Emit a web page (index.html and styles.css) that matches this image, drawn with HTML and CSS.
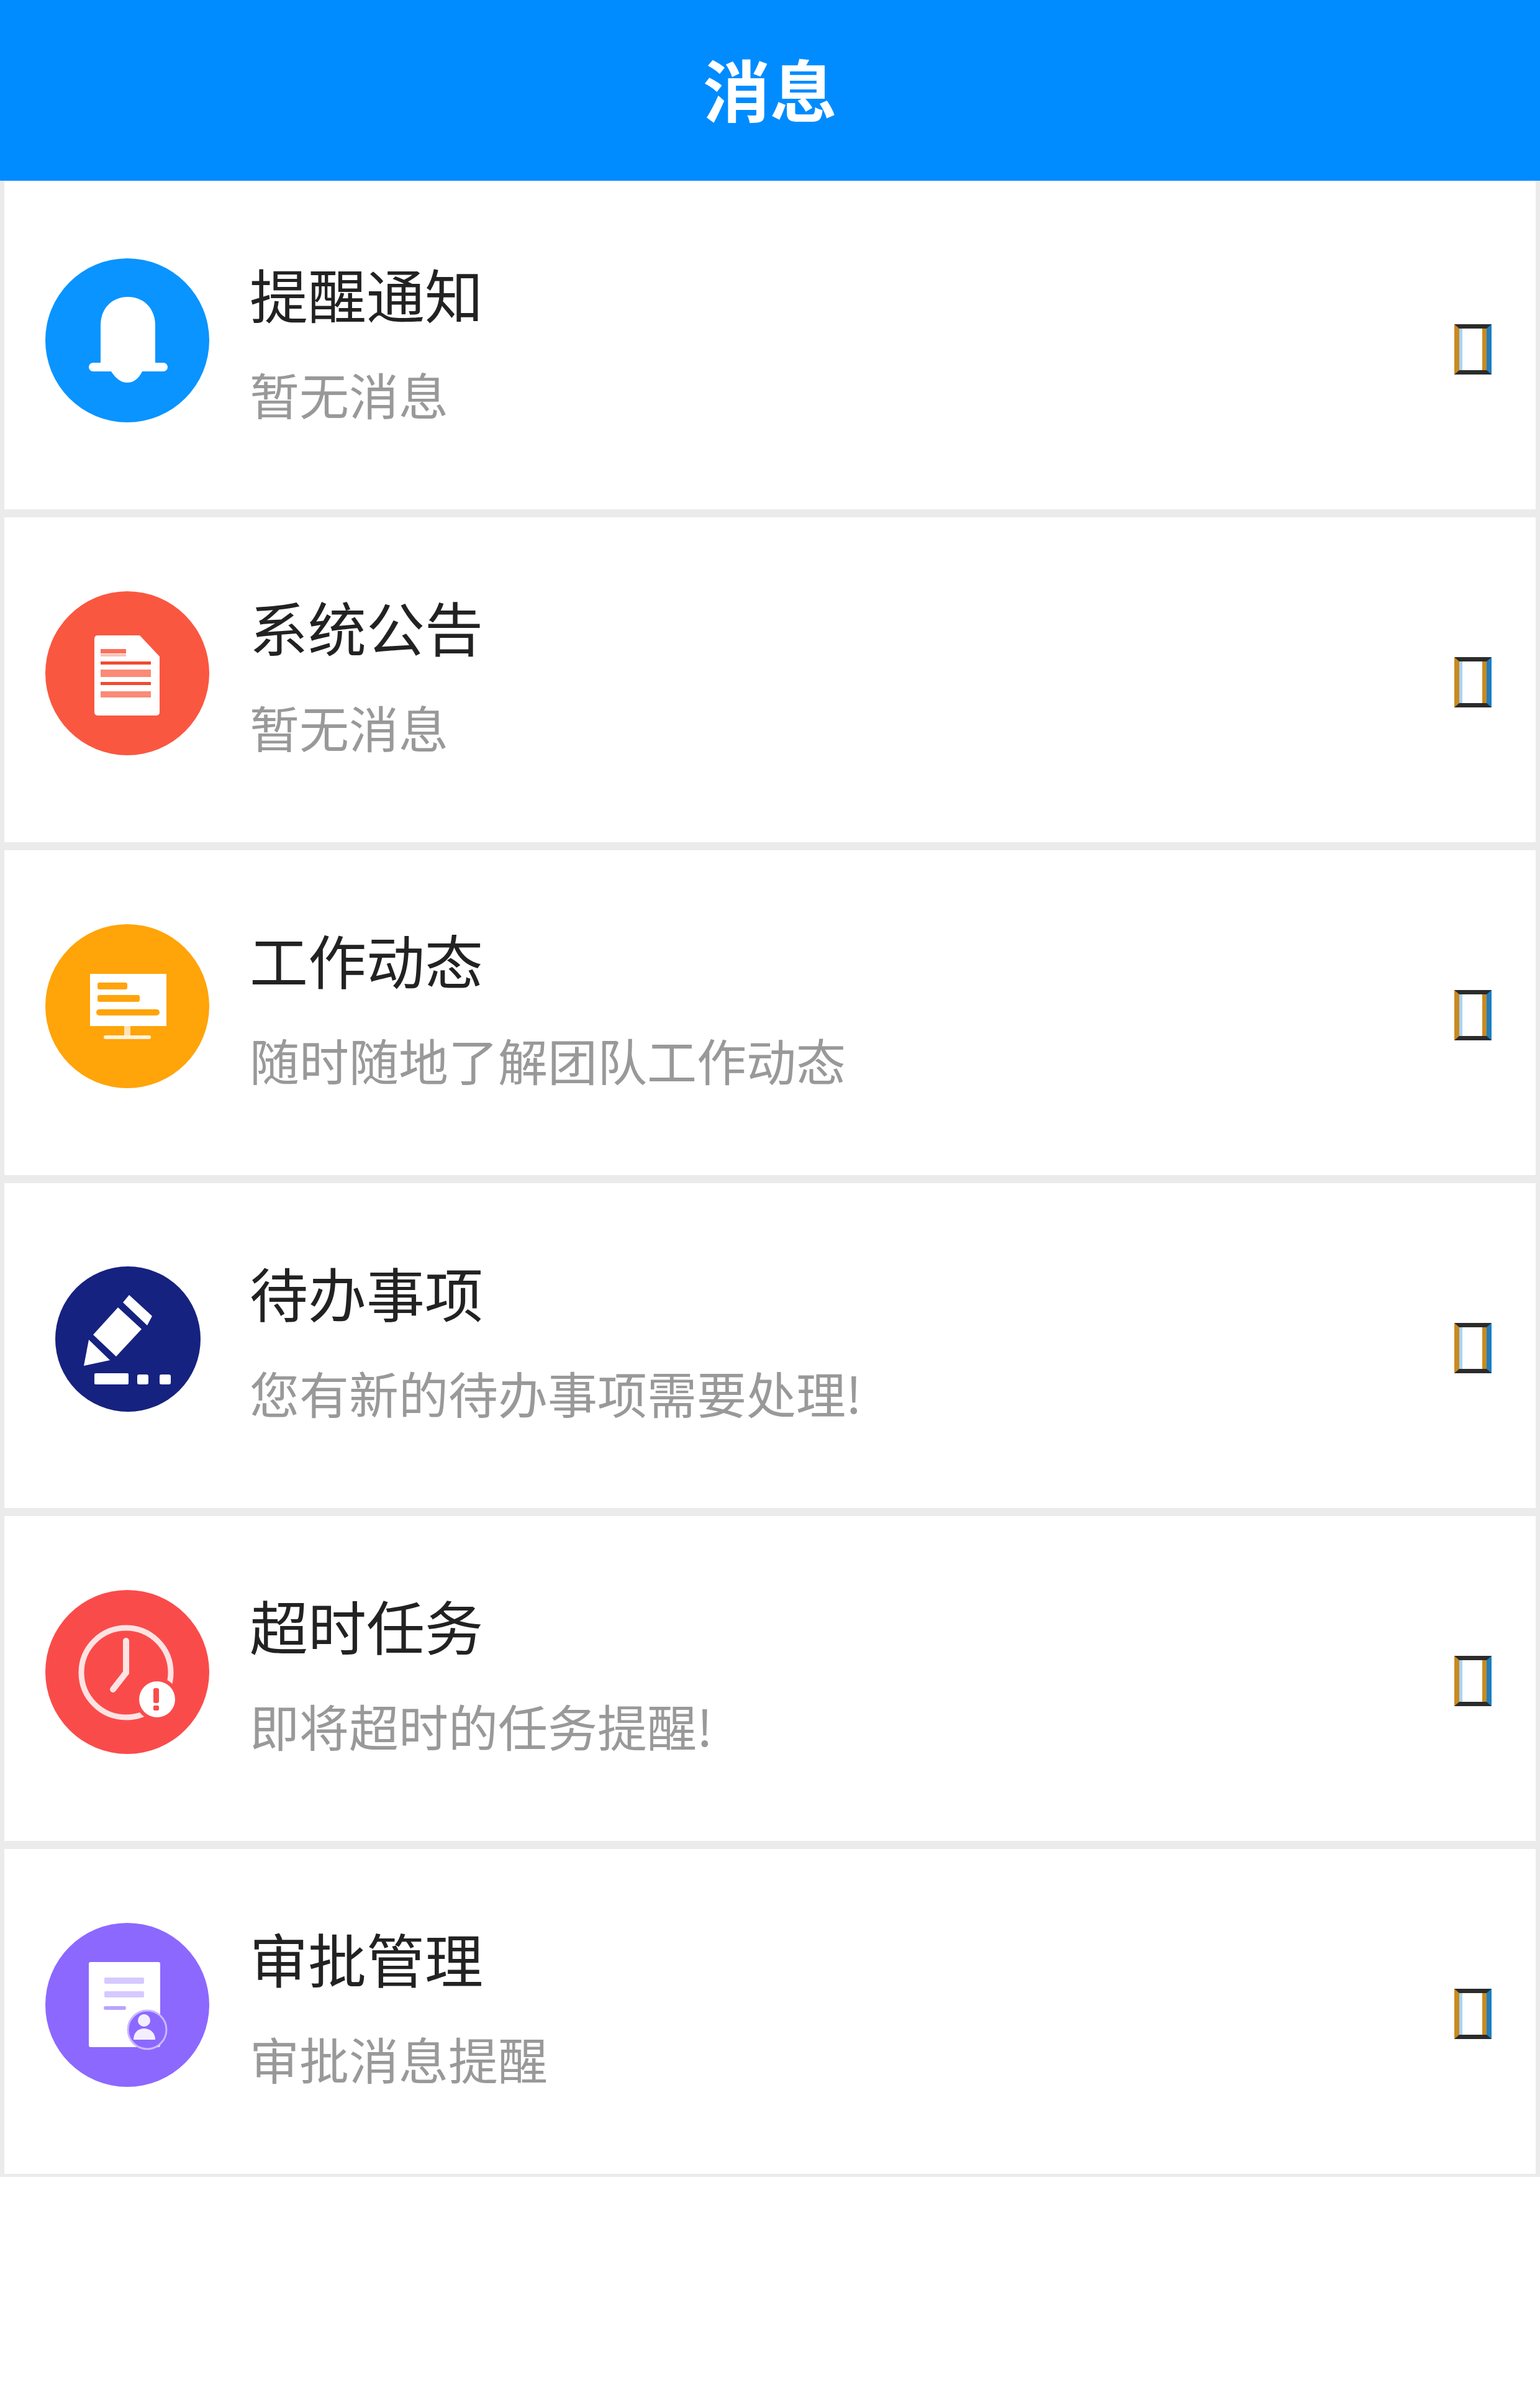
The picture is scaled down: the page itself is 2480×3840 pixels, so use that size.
FILE: index.html
```html
<!DOCTYPE html>
<html lang="zh-CN">
<head>
    <meta charset="UTF-8">
    <meta name="viewport" content="width=device-width, initial-scale=1.0">
    <title>消息</title>
    <link rel="stylesheet" href="styles.css">
</head>
<body>
    <div class="header">
        <h1>消息</h1>
    </div>
    <div class="msg-list">
        <!-- reminders -->
        <div class="msg-row">
            <svg class="msg-icon" viewBox="0 0 264 264">
                <circle cx="132" cy="132" r="132" fill="#0a94ff"/>
                <path fill="#fff" d="M89 168V108C89 80 108 62 133 62C158 62 177 80 177 108V168H190a7 7 0 0 1 0 14H156C150 194 142 200 132 200C122 200 114 194 106 182H77a7 7 0 0 1 0-14Z"/>
            </svg>
            <div class="msg-text">
                <div class="msg-title">提醒通知</div>
                <div class="msg-desc">暂无消息</div>
            </div>
            <span class="msg-arrow"></span>
        </div>
        <!-- announcements -->
        <div class="msg-row">
            <svg class="msg-icon" viewBox="0 0 264 264">
                <circle cx="132" cy="132" r="132" fill="#fa5740"/>
                <path fill="#fff" d="M84 71H152L184 105V195a5 5 0 0 1-5 5H84a5 5 0 0 1-5-5V76a5 5 0 0 1 5-5Z"/>
                <rect x="89" y="93" width="41" height="7" fill="#fb6f5a"/>
                <rect x="89" y="101" width="41" height="4" fill="#fdc3ba"/>
                <rect x="89" y="113" width="81" height="5" fill="#f14a30"/>
                <rect x="89" y="126" width="81" height="12" fill="#fb8a77"/>
                <rect x="89" y="146" width="81" height="5" fill="#f14a30"/>
                <rect x="89" y="161" width="81" height="10" fill="#fb8a77"/>
            </svg>
            <div class="msg-text">
                <div class="msg-title">系统公告</div>
                <div class="msg-desc">暂无消息</div>
            </div>
            <span class="msg-arrow"></span>
        </div>
        <!-- work feed -->
        <div class="msg-row">
            <svg class="msg-icon" viewBox="0 0 264 264">
                <circle cx="132" cy="132" r="132" fill="#ffa409"/>
                <rect x="72" y="80" width="123" height="84" fill="#fff"/>
                <rect x="84" y="94" width="48" height="11" rx="3" fill="#ffa409"/>
                <rect x="84" y="114" width="68" height="11" rx="3" fill="#ffa409"/>
                <rect x="82" y="137" width="102" height="10" rx="5" fill="#ffa409"/>
                <rect x="127" y="164" width="10" height="16" fill="#ffe3b5"/>
                <rect x="94" y="179" width="76" height="6" rx="3" fill="#fff3dc"/>
            </svg>
            <div class="msg-text">
                <div class="msg-title">工作动态</div>
                <div class="msg-desc">随时随地了解团队工作动态</div>
            </div>
            <span class="msg-arrow"></span>
        </div>
        <!-- todo items -->
        <div class="msg-row">
            <svg class="msg-icon" viewBox="0 0 264 264">
                <circle cx="133" cy="132" r="117" fill="#16227f"/>
                <path fill="#fff" d="M135 61L172 95L164 110L125 73Z"/>
                <path fill="#fff" d="M117 81L155 116L114 160L77 125Z"/>
                <path fill="#fff" d="M70 133L104 166L62 175Z"/>
                <rect x="79" y="187" width="55" height="18" rx="2" fill="#fff"/>
                <rect x="148" y="189" width="18" height="16" rx="3" fill="#fff"/>
                <rect x="184" y="189" width="18" height="16" rx="3" fill="#fff"/>
            </svg>
            <div class="msg-text">
                <div class="msg-title">待办事项</div>
                <div class="msg-desc">您有新的待办事项需要处理!</div>
            </div>
            <span class="msg-arrow"></span>
        </div>
        <!-- overdue tasks -->
        <div class="msg-row">
            <svg class="msg-icon" viewBox="0 0 264 264">
                <circle cx="132" cy="132" r="132" fill="#fa4b4b"/>
                <circle cx="130" cy="133" r="72" fill="none" stroke="#fde3e3" stroke-width="9"/>
                <path fill="none" stroke="#fde3e3" stroke-width="10" stroke-linecap="round" d="M130 82V133L109 160"/>
                <circle cx="180" cy="176" r="35" fill="#fa4b4b"/>
                <circle cx="180" cy="176" r="29" fill="#fff"/>
                <rect x="174" y="158" width="9" height="24" rx="3" fill="#fa4b4b"/>
                <rect x="174" y="186" width="9" height="8" rx="2" fill="#fa4b4b"/>
            </svg>
            <div class="msg-text">
                <div class="msg-title">超时任务</div>
                <div class="msg-desc">即将超时的任务提醒!</div>
            </div>
            <span class="msg-arrow"></span>
        </div>
        <!-- approvals -->
        <div class="msg-row">
            <svg class="msg-icon" viewBox="0 0 264 264">
                <circle cx="132" cy="132" r="132" fill="#8c68ff"/>
                <rect x="70" y="63" width="115" height="137" rx="3" fill="#fff"/>
                <rect x="95" y="88" width="64" height="10" rx="2" fill="#d6c9ff"/>
                <rect x="95" y="110" width="64" height="10" rx="2" fill="#d6c9ff"/>
                <rect x="94" y="134" width="36" height="6" rx="3" fill="#b9a4ff"/>
                <circle cx="164" cy="172" r="31" fill="#8c68ff" stroke="#c9b9ff" stroke-width="3"/>
                <circle cx="159" cy="157" r="10" fill="#f3efff"/>
                <path fill="#f3efff" d="M142 188C142 176 150 170 159 170C168 170 177 176 177 188Z"/>
            </svg>
            <div class="msg-text">
                <div class="msg-title">审批管理</div>
                <div class="msg-desc">审批消息提醒</div>
            </div>
            <span class="msg-arrow"></span>
        </div>
    </div>
</body>
</html>
```

FILE: styles.css
```css
body {
    font-family: "Noto Sans CJK SC", "Liberation Sans", sans-serif;
    background-color: #ffffff;
    margin: 0;
    padding: 0;
}
.header {
    box-sizing: border-box;
    height: 291px;
    padding-bottom: 10px;
    background-color: #008cff;
    display: flex;
    align-items: center;
    justify-content: center;
}
.header h1 {
    margin: 0;
    font-size: 108px;
    font-weight: bold;
    color: #fff;
}
.msg-list {
    border-left: 7px solid #ebebeb;
    border-right: 7px solid #ebebeb;
    padding-top: 6px;
}
.msg-row {
    height: 523px;
    display: flex;
    align-items: center;
    padding-left: 66px;
    padding-right: 71px;
    border-bottom: 13px solid #ebebeb;
}
.msg-row:last-child {
    border-bottom-width: 5px;
}
.msg-icon {
    width: 264px;
    height: 264px;
    flex-shrink: 0;
    margin-top: -21px;
}
.msg-text {
    flex: 1;
    margin-left: 65px;
    margin-top: -13px;
}
.msg-title {
    font-size: 94px;
    line-height: 120px;
    color: #222;
}
.msg-desc {
    font-size: 80px;
    line-height: 120px;
    margin-top: 41px;
    color: #999;
}
.msg-arrow {
    box-sizing: border-box;
    width: 60px;
    height: 81px;
    margin-top: 7px;
    border-style: solid;
    border-width: 7px 8px;
    border-color: #2b2b2b #1f7fc0 #2b2b2b #c98a20;
    box-shadow: inset 5px 0 #a8d4f5, inset -7px 0 #c98a20;
}
```
